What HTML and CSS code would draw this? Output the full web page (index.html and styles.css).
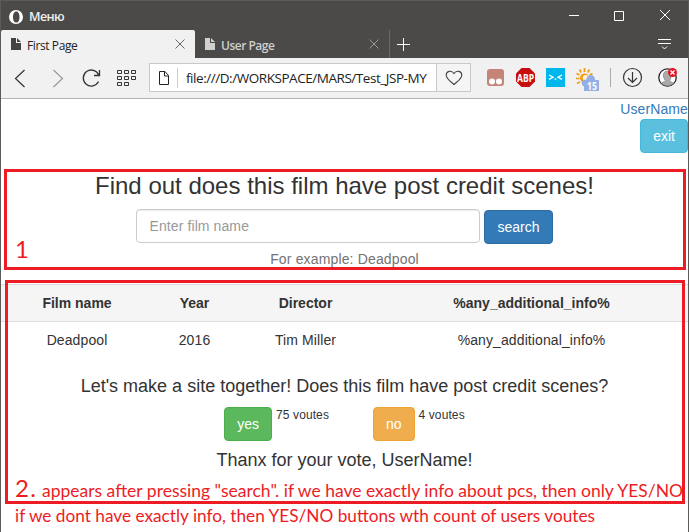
FILE: index.html
```html
<!DOCTYPE html>
<html lang="en">
<head>
<meta charset="utf-8">
<title>First Page</title>
<link rel="stylesheet" href="styles.css">
</head>
<body>
<div class="window">
  <header class="titlebar">
    <svg class="opera" width="14" height="14" viewBox="0 0 14 14"><path fill="#fff" fill-rule="evenodd" d="M7 0a7 7 0 1 0 0 14A7 7 0 0 0 7 0zM7.300 1.400c2.200 0 3.200 2.500 3.200 5.600s-1 5.600-3.200 5.600S4 10.100 4 7s1.100-5.600 3.300-5.600z"/></svg>
    <span class="menu">Меню</span>
    <svg class="controls" width="102" height="12" viewBox="0 0 102 12" fill="none" stroke="#fff"><path d="M0 6.500h10M45.500 2.500h9v9h-9zM91 1l10 10M101 1L91 11"/></svg>
  </header>
  <nav class="tabs">
    <div class="tab active">
      <svg width="10" height="12" viewBox="0 0 10 12"><path fill="#444" d="M0 0h5v5h5v7H0zM6 0l4 4H6z"/></svg>
      <span class="tab-title">First Page</span>
      <svg class="close" width="10" height="10" viewBox="0 0 10 10" stroke="#666"><path d="M.5.5l9 9M9.500.5l-9 9"/></svg>
    </div>
    <div class="tab">
      <svg width="10" height="12" viewBox="0 0 10 12"><path fill="#d0d0cf" d="M0 0h5v5h5v7H0zM6 0l4 4H6z"/></svg>
      <span class="tab-title">User Page</span>
      <svg class="close" width="10" height="10" viewBox="0 0 10 10" stroke="#999"><path d="M.5.5l9 9M9.500.5l-9 9"/></svg>
    </div>
    <svg class="plus" width="13" height="13" viewBox="0 0 13 13" stroke="#fff"><path d="M6.500 0v13M0 6.500h13"/></svg>
    <svg class="tab-menu" width="13" height="12" viewBox="0 0 13 12" fill="none" stroke="#fff"><path d="M0 1.500h13M0 5.500h13M4 8.500l2.500 2.500L9 8.500"/></svg>
  </nav>
  <div class="toolbar">
    <svg class="nav-icons" width="100" height="20" viewBox="1 0 100 20" fill="none"><path stroke="#333" stroke-width="1.200" d="M24.500 2l-9 8.500 9 8.500"/><path stroke="#999" stroke-width="1.200" d="M53.500 2l9 8.500-9 8.500"/><path stroke="#333" stroke-width="1.300" d="M98.700 7A8 8 0 1 0 98.500 13.500M99.500 2v5.500H94"/></svg>
    <svg class="grid-icon" width="19" height="16" viewBox="0 0 19 16" fill="none" stroke="#333"><path d="M.5.5h4v3h-4zM7.500.5h4v3h-4zM14.500.5h4v3h-4zM.5 6.500h4v3h-4zM7.500 6.500h4v3h-4zM14.500 6.500h4v3h-4zM.5 12.500h4v3h-4zM7.500 12.500h4v3h-4z"/></svg>
    <div class="address">
      <div class="field">
        <svg width="10" height="14" viewBox="0 0 10 14" fill="none" stroke="#222"><path d="M.5.5h5.500l3.500 4v9h-9zM5.500.5v4.500h4"/></svg>
        <span class="url">file:///D:/WORKSPACE/MARS/Test_JSP-MY</span>
      </div>
      <div class="heart"><svg width="18" height="16" viewBox="0 0 18 16" fill="none" stroke="#444" stroke-width="1.100"><path d="M9 14.500C5 11 1.200 8.500 1.200 5.200 1.200 1 6.500-.3 9 3.500c2.500-3.800 7.800-2.500 7.800 1.700 0 3.300-3.800 5.800-7.800 9.300z"/></svg></div>
    </div>
    <svg class="extensions" width="200" height="26" viewBox="0 0 200 26">
      <rect x="1" y="4" width="17" height="17" rx="3" fill="#c68377"/><circle cx="6" cy="16.500" r="3" fill="#fff"/><circle cx="13" cy="16.500" r="3" fill="#fff"/>
      <path fill="#c70d0d" d="M35.500 3h8l5.500 5.500v8L43.500 22h-8L30 16.500v-8z"/><text x="31" y="16.500" class="abp" textLength="17" lengthAdjust="spacingAndGlyphs">ABP</text>
      <rect x="60" y="3" width="19" height="19" fill="#00b7eb"/><path fill="none" stroke="#fff" stroke-width="1.300" d="M63 10l4 2.200-4 2.200M76 10l-4 2.200 4 2.200"/><path fill="#fff" d="M68.700 13.500h1.600v1.600h-1.600z"/>
      <g stroke="#f39c12" stroke-width="1.700"><path d="M98.500 3v4M93.500 4.500l1.700 3M90.500 8.500l3 1.500M90 13.500h3.500M91 18.500l3-1.500M103.500 4.500l-1.700 3M106.500 8.500l-3 1.500"/></g><circle cx="98.500" cy="13" r="4.500" fill="#f39c12"/><circle cx="99.500" cy="12.700" r="2.700" fill="#fff1da"/>
      <path fill="#93afe6" d="M97 21c-3-4 0-7 3-6 1-6 8-7 9-1v7z"/><rect x="98" y="15" width="15" height="11" fill="#93afe6"/><text x="101" y="24.500" class="temp" textLength="10" lengthAdjust="spacingAndGlyphs">15</text>
      <path stroke="#aaa" d="M124.500 3v19"/>
      <g fill="none" stroke="#333" stroke-width="1.200"><circle cx="146.500" cy="12.500" r="9"/><path d="M146.500 7v10M142 13l4.500 4.500L151 13"/></g>
      <circle cx="181.500" cy="12.500" r="8.700" fill="#fff" stroke="#222" stroke-width="1.300"/><path fill="#aaa" stroke="#777" stroke-width=".6" d="M175.500 18.500c1-2 4-1.500 4-2.500-4-6-2-10 2-10s5.500 4 2 10c0 1 3 .5 4 2.500-4 3-8 3-12 0z"/><circle cx="186.500" cy="7.500" r="4.500" fill="#e81123"/><path stroke="#fff" stroke-width="1.300" d="M184.500 5.500l4 4M188.500 5.500l-4 4"/>
    </svg>
  </div>
  <main class="page">
    <div class="account"><a class="username">UserName</a><button class="btn info">exit</button></div>
    <section class="search">
      <h3>Find out does this film have post credit scenes!</h3>
      <div class="search-row"><input class="input" placeholder="Enter film name"><button class="btn primary">search</button></div>
      <p class="help">For example: Deadpool</p>
    </section>
    <table class="films">
      <colgroup><col class="c-name"><col class="c-year"><col class="c-director"><col></colgroup>
      <thead><tr><th>Film name</th><th>Year</th><th>Director</th><th>%any_additional_info%</th></tr></thead>
      <tbody><tr><td>Deadpool</td><td>2016</td><td>Tim Miller</td><td>%any_additional_info%</td></tr></tbody>
    </table>
    <section class="vote">
      <h4>Let's make a site together! Does this film have post credit scenes?</h4>
      <div class="vote-row">
        <div class="choice yes"><button class="btn success">yes</button><span class="count">75 voutes</span></div>
        <div class="choice"><button class="btn warning">no</button><span class="count">4 voutes</span></div>
      </div>
      <h4>Thanx for your vote, UserName!</h4>
    </section>
  </main>
</div>
<svg class="notes" width="689" height="532" viewBox="0 0 689 532">
  <g fill="none" stroke="#ed1c24" stroke-width="3"><path d="M5.500 170.500h679v98h-679zM6.500 281.500h677v221h-677z"/></g>
  <text class="num" x="15" y="258">1</text>
  <text class="num" x="15" y="497" textLength="21">2.</text>
  <text class="note" x="42" y="497" textLength="641" lengthAdjust="spacingAndGlyphs">appears after pressing "search". if we have exactly info about pcs, then only YES/NO</text>
  <text class="note" x="15" y="522" textLength="580" lengthAdjust="spacingAndGlyphs">if we dont have exactly info, then YES/NO buttons wth count of users voutes</text>
</svg>
</body>
</html>
```
FILE: styles.css
```css
* { box-sizing: border-box; }
body { margin: 0; width: 689px; height: 532px; overflow: hidden; background: #fff; font-family: "Liberation Sans", Arial, sans-serif; font-size: 14px; line-height: 20px; color: #333; }
svg { display: block; flex: none; }
.window { height: 532px; border: solid #5c5b5a; border-width: 1px 1px 0; }
.titlebar { height: 29px; background: #4b4a48; display: flex; align-items: center; padding: 0 17px 0 8px; }
.opera { margin-top: 2px; }
.menu { margin: 2px 0 0 6px; color: #eee; font: 600 12.500px/16px "Open Sans", sans-serif; letter-spacing: -.6px; }
.controls { margin: -1px 0 0 auto; }
.tabs { height: 28px; background: #4b4a48; display: flex; align-items: center; }
.tab { width: 194px; height: 28px; display: flex; align-items: center; padding: 0 10px; color: #d0d0cf; font: 600 12px/16px "Open Sans", sans-serif; }
.tab + .tab { width: 195px; border-right: 1px solid #6c6b69; }
.tab.active { background: #f1f1f1; color: #222; border-radius: 2px 2px 0 0; font-weight: 400; }
.tab-title { margin: 3px 0 0 6px; white-space: nowrap; letter-spacing: -.5px; }
.active .tab-title { letter-spacing: -.4px; }
.close { margin-left: auto; }
.plus { margin-left: 7px; }
.tab-menu { margin: 0 17px 0 auto; }
.toolbar { height: 41px; background: #f1f1f1; border-bottom: 1px solid #b4b4b4; display: flex; align-items: center; }
.nav-icons { margin-right: 16px; }
.address { width: 322px; height: 29px; margin: 0 0 1px 13px; display: flex; border: 1px solid #c8c8c8; background: #fff; }
.field { width: 286px; display: flex; align-items: center; padding-left: 9px; overflow: hidden; }
.url { margin-left: 8px; padding-left: 8px; border-left: 1px solid #ccc; white-space: nowrap; color: #222; font: 13.500px/20px "Open Sans", sans-serif; letter-spacing: -.45px; }
.heart { width: 34px; display: flex; align-items: center; justify-content: center; border-left: 1px solid #c8c8c8; background: #f5f5f5; }
.extensions { margin-left: 15px; }
.abp, .temp { fill: #fff; font: 700 10.500px "Open Sans", sans-serif; }
.account { display: flex; flex-direction: column; align-items: flex-end; height: 54px; }
.username { color: #337ab7; letter-spacing: .1px; }
.btn { height: 34px; padding: 6px 12px; border: 1px solid; border-radius: 4px; color: #fff; font: 14px/20px "Liberation Sans", Arial, sans-serif; }
.info { background: #5bc0de; border-color: #46b8da; }
.primary { background: #337ab7; border-color: #2e6da4; }
.success { background: #5cb85c; border-color: #4cae4c; }
.warning { background: #f0ad4e; border-color: #eea236; }
.search { text-align: center; padding-top: 20px; height: 131px; }
h3, h4, p { margin: 0; font-weight: 400; }
h3 { font-size: 24px; line-height: 26px; }
.search-row { display: flex; justify-content: center; gap: 4px; margin-top: 10px; align-items: flex-start; }
.search-row .btn { margin-top: 1px; }
.input { width: 344px; height: 34px; padding: 6px 12px; border: 1px solid #ccc; border-radius: 4px; box-shadow: inset 0 1px 1px rgba(0,0,0,.075); font: 14px/20px "Liberation Sans", Arial, sans-serif; letter-spacing: .1px; }
.input::placeholder { color: #999; }
.help { color: #737373; margin-top: 5px; letter-spacing: .15px; }
.films { width: 687px; table-layout: fixed; border-collapse: separate; border-spacing: 0; text-align: center; }
.c-name { width: 152px; } .c-year { width: 83px; } .c-director { width: 139px; }
th, td { padding: 8px; }
td { letter-spacing: .1px; }
th { background: #f5f5f5; border: solid #ddd; border-width: 1px 0; }
.vote { text-align: center; padding-top: 18px; }
h4 { font-size: 18px; line-height: 20px; }
.vote-row { display: flex; justify-content: center; margin: 11px 0 9px; }
.choice { display: flex; gap: 4px; }
.yes { margin-right: 44px; }
.count { font-size: 12px; line-height: 16px; letter-spacing: .1px; }
.notes { position: absolute; left: 0; top: 0; pointer-events: none; }
.num, .note { fill: #ed1c24; font-family: Lato, sans-serif; }
.num { font-size: 24px; }
.note { font-size: 16.500px; }
```
